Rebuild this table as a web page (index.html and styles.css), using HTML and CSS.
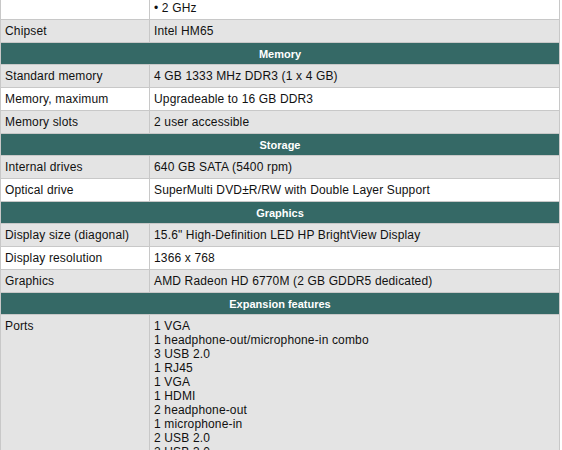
FILE: index.html
```html
<!DOCTYPE html>
<html>
<head>
<meta charset="utf-8">
<link rel="stylesheet" href="styles.css">
</head>
<body>
<div class="viewport">
<table class="specs">
  <colgroup><col class="c-label"><col class="c-value"></colgroup>
  <tbody>
    <tr class="white"><td></td><td>• 2 GHz</td></tr>
    <tr class="gray"><td>Chipset</td><td>Intel HM65</td></tr>
    <tr class="section"><th colspan="2">Memory</th></tr>
    <tr class="gray"><td>Standard memory</td><td>4 GB 1333 MHz DDR3 (1 x 4 GB)</td></tr>
    <tr class="white"><td>Memory, maximum</td><td>Upgradeable to 16 GB DDR3</td></tr>
    <tr class="gray"><td>Memory slots</td><td>2 user accessible</td></tr>
    <tr class="section"><th colspan="2">Storage</th></tr>
    <tr class="gray"><td>Internal drives</td><td>640 GB SATA (5400 rpm)</td></tr>
    <tr class="white"><td>Optical drive</td><td>SuperMulti DVD±R/RW with Double Layer Support</td></tr>
    <tr class="section"><th colspan="2">Graphics</th></tr>
    <tr class="gray"><td>Display size (diagonal)</td><td>15.6" High-Definition LED HP BrightView Display</td></tr>
    <tr class="white"><td>Display resolution</td><td>1366 x 768</td></tr>
    <tr class="gray"><td>Graphics</td><td>AMD Radeon HD 6770M (2 GB GDDR5 dedicated)</td></tr>
    <tr class="section"><th colspan="2">Expansion features</th></tr>
    <tr class="gray"><td>Ports</td><td>1 VGA<br>1 headphone-out/microphone-in combo<br>3 USB 2.0<br>1 RJ45<br>1 VGA<br>1 HDMI<br>2 headphone-out<br>1 microphone-in<br>2 USB 2.0<br>2 USB 3.0</td></tr>
  </tbody>
</table>
</div>
</body>
</html>
```

FILE: styles.css
```css
html, body {
  margin: 0;
  padding: 0;
  background: #ffffff;
}

.viewport {
  width: 562px;
  height: 450px;
  overflow: hidden;
}

.specs {
  width: 560px;
  margin-top: -4px;
  border-collapse: collapse;
  table-layout: fixed;
  font-family: "Liberation Sans", Arial, sans-serif;
  font-size: 12px;
  color: #111111;
}

.c-label { width: 149px; }

.specs td {
  border: 1px solid #c8c8c8;
  padding: 4px 4px 4px 4px;
  line-height: 14px;
  letter-spacing: 0.15px;
  vertical-align: top;
}

.specs tr.gray td { background: #e4e4e4; }
.specs tr.white td { background: #ffffff; }

.specs tr.section th {
  background: #356966;
  color: #ffffff;
  font-size: 11px;
  font-weight: bold;
  line-height: 14px;
  padding: 4px 4px 3px 4px;
  border: 1px solid #c8c8c8;
  text-align: center;
}
```
